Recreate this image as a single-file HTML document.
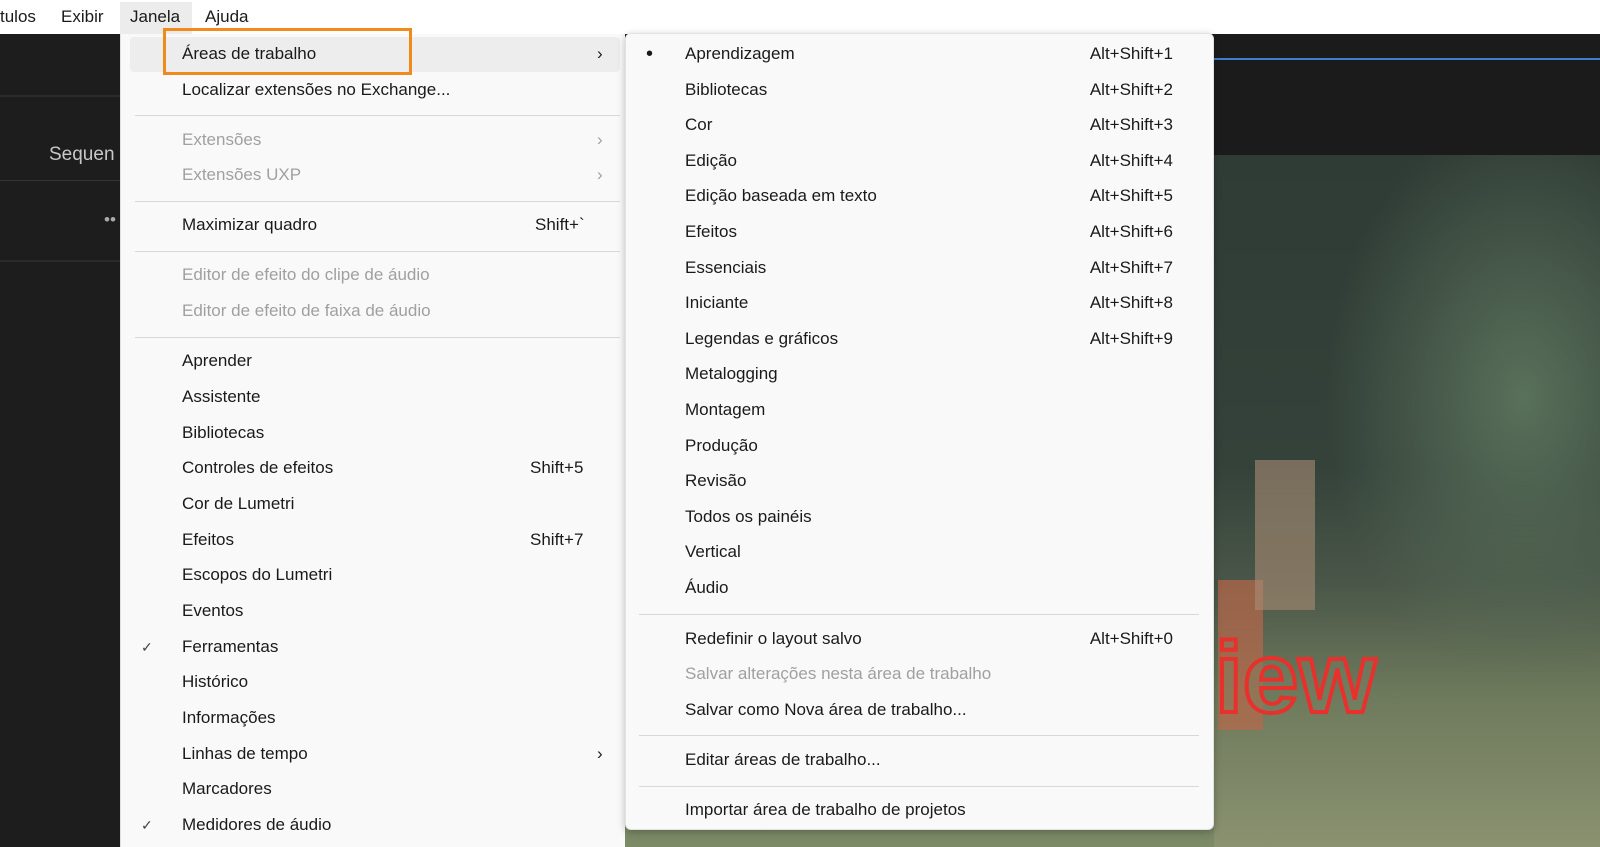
<!DOCTYPE html>
<html><head><meta charset="utf-8"><style>
*{margin:0;padding:0;box-sizing:border-box}
body{width:1600px;height:847px;overflow:hidden;position:relative;background:#1d1d1d;font-family:"Liberation Sans",sans-serif;font-size:17px;color:#1a1a1a}
.a{position:absolute;white-space:nowrap;line-height:24px}
.d{color:#a0a0a0}
.sep{position:absolute;height:1px;background:#d8d8d8}
.r{text-align:right}
</style></head><body>
<div class="a" style="left:0;top:0;width:1600px;height:34px;background:#fff"></div>
<div class="a" style="left:120px;top:2px;width:72px;height:32px;background:#ececec"></div>
<div class="a" style="left:0;top:5px">tulos</div>
<div class="a" style="left:61px;top:5px">Exibir</div>
<div class="a" style="left:130px;top:5px">Janela</div>
<div class="a" style="left:205px;top:5px">Ajuda</div>
<div class="a" style="left:0;top:95px;width:120px;height:2px;background:#2a2a2a"></div>
<div class="a" style="left:0;top:180px;width:120px;height:1px;background:#333"></div>
<div class="a" style="left:0;top:260px;width:120px;height:2px;background:#2a2a2a"></div>
<div class="a" style="left:49px;top:143px;color:#c8c8c8;font-size:19px">Sequen</div>
<div class="a" style="left:104px;top:208px;color:#aaa">••</div>
<div class="a" style="left:1214px;top:34px;width:386px;height:62px;background:#1b1b1b"></div>
<div class="a" style="left:1214px;top:58px;width:386px;height:2px;background:#3d7fd1"></div>
<div class="a" style="left:625px;top:96px;width:975px;height:751px;background:linear-gradient(180deg,#2e3a34 0%,#34433a 30%,#3d4a3e 55%,#5d6a52 75%,#7d8a66 100%)"></div>
<div class="a" style="left:1214px;top:155px;width:386px;height:692px;background:radial-gradient(ellipse at 80% 35%,#59705a 0%,rgba(60,75,62,0) 45%),linear-gradient(180deg,#2f3b35 0%,#34423a 45%,#4a5648 62%,#6e7a5c 78%,#8a9270 100%)"></div>
<div class="a" style="left:1214px;top:96px;width:386px;height:59px;background:#1b1b1b"></div>
<div class="a" style="left:1218px;top:580px;width:45px;height:150px;background:#b8684a;opacity:.7"></div>
<div class="a" style="left:1255px;top:460px;width:60px;height:150px;background:#a88c74;opacity:.6"></div>
<div class="a" style="left:1215px;top:628px;color:rgba(120,130,100,.4);-webkit-text-stroke:4px #e8302c;font-size:100px;font-weight:bold;line-height:100px">iew</div>
<div class="a" style="left:120px;top:34px;width:505px;height:813px;background:#f9f9f9;border-left:1px solid #e0e0e0"></div>
<div class="a" style="left:130px;top:37px;width:490px;height:35px;background:#ededed;border-radius:4px"></div>
<div class="a" style="left:163px;top:28px;width:249px;height:47px;border:3px solid #f08a1c"></div>
<div class="a" style="left:182px;top:42px">Áreas de trabalho</div><div class="a" style="left:597px;top:42px">›</div>
<div class="a" style="left:182px;top:78px">Localizar extensões no Exchange...</div>
<div class="sep" style="left:135px;top:115px;width:485px"></div>
<div class="a d" style="left:182px;top:128px">Extensões</div><div class="a d" style="left:597px;top:128px">›</div>
<div class="a d" style="left:182px;top:163px">Extensões UXP</div><div class="a d" style="left:597px;top:163px">›</div>
<div class="sep" style="left:135px;top:201px;width:485px"></div>
<div class="a" style="left:182px;top:213px">Maximizar quadro</div><div class="a" style="left:535px;top:213px">Shift+`</div>
<div class="sep" style="left:135px;top:251px;width:485px"></div>
<div class="a d" style="left:182px;top:263px">Editor de efeito do clipe de áudio</div>
<div class="a d" style="left:182px;top:299px">Editor de efeito de faixa de áudio</div>
<div class="sep" style="left:135px;top:337px;width:485px"></div>
<div class="a" style="left:182px;top:349px">Aprender</div>
<div class="a" style="left:182px;top:385px">Assistente</div>
<div class="a" style="left:182px;top:421px">Bibliotecas</div>
<div class="a" style="left:182px;top:456px">Controles de efeitos</div><div class="a" style="left:530px;top:456px">Shift+5</div>
<div class="a" style="left:182px;top:492px">Cor de Lumetri</div>
<div class="a" style="left:182px;top:528px">Efeitos</div><div class="a" style="left:530px;top:528px">Shift+7</div>
<div class="a" style="left:182px;top:563px">Escopos do Lumetri</div>
<div class="a" style="left:182px;top:599px">Eventos</div>
<div class="a" style="left:141px;top:635px;font-size:14px;color:#444">✓</div><div class="a" style="left:182px;top:635px">Ferramentas</div>
<div class="a" style="left:182px;top:670px">Histórico</div>
<div class="a" style="left:182px;top:706px">Informações</div>
<div class="a" style="left:182px;top:742px">Linhas de tempo</div><div class="a" style="left:597px;top:742px">›</div>
<div class="a" style="left:182px;top:777px">Marcadores</div>
<div class="a" style="left:141px;top:813px;font-size:14px;color:#444">✓</div><div class="a" style="left:182px;top:813px">Medidores de áudio</div>
<div class="a" style="left:625px;top:33px;width:589px;height:797px;background:#f9f9f9;border:1px solid #e2e2e2;border-radius:6px;box-shadow:0 2px 8px rgba(0,0,0,.25)"></div>
<div class="a" style="left:646px;top:42px;font-size:20px">•</div>
<div class="a" style="left:685px;top:42px">Aprendizagem</div><div class="a r" style="left:1050px;width:123px;top:42px">Alt+Shift+1</div>
<div class="a" style="left:685px;top:78px">Bibliotecas</div><div class="a r" style="left:1050px;width:123px;top:78px">Alt+Shift+2</div>
<div class="a" style="left:685px;top:113px">Cor</div><div class="a r" style="left:1050px;width:123px;top:113px">Alt+Shift+3</div>
<div class="a" style="left:685px;top:149px">Edição</div><div class="a r" style="left:1050px;width:123px;top:149px">Alt+Shift+4</div>
<div class="a" style="left:685px;top:184px">Edição baseada em texto</div><div class="a r" style="left:1050px;width:123px;top:184px">Alt+Shift+5</div>
<div class="a" style="left:685px;top:220px">Efeitos</div><div class="a r" style="left:1050px;width:123px;top:220px">Alt+Shift+6</div>
<div class="a" style="left:685px;top:256px">Essenciais</div><div class="a r" style="left:1050px;width:123px;top:256px">Alt+Shift+7</div>
<div class="a" style="left:685px;top:291px">Iniciante</div><div class="a r" style="left:1050px;width:123px;top:291px">Alt+Shift+8</div>
<div class="a" style="left:685px;top:327px">Legendas e gráficos</div><div class="a r" style="left:1050px;width:123px;top:327px">Alt+Shift+9</div>
<div class="a" style="left:685px;top:362px">Metalogging</div>
<div class="a" style="left:685px;top:398px">Montagem</div>
<div class="a" style="left:685px;top:434px">Produção</div>
<div class="a" style="left:685px;top:469px">Revisão</div>
<div class="a" style="left:685px;top:505px">Todos os painéis</div>
<div class="a" style="left:685px;top:540px">Vertical</div>
<div class="a" style="left:685px;top:576px">Áudio</div>
<div class="sep" style="left:639px;top:614px;width:560px"></div>
<div class="a" style="left:685px;top:627px">Redefinir o layout salvo</div><div class="a r" style="left:1050px;width:123px;top:627px">Alt+Shift+0</div>
<div class="a d" style="left:685px;top:662px">Salvar alterações nesta área de trabalho</div>
<div class="a" style="left:685px;top:698px">Salvar como Nova área de trabalho...</div>
<div class="sep" style="left:639px;top:735px;width:560px"></div>
<div class="a" style="left:685px;top:748px">Editar áreas de trabalho...</div>
<div class="sep" style="left:639px;top:786px;width:560px"></div>
<div class="a" style="left:685px;top:798px">Importar área de trabalho de projetos</div>
</body></html>
